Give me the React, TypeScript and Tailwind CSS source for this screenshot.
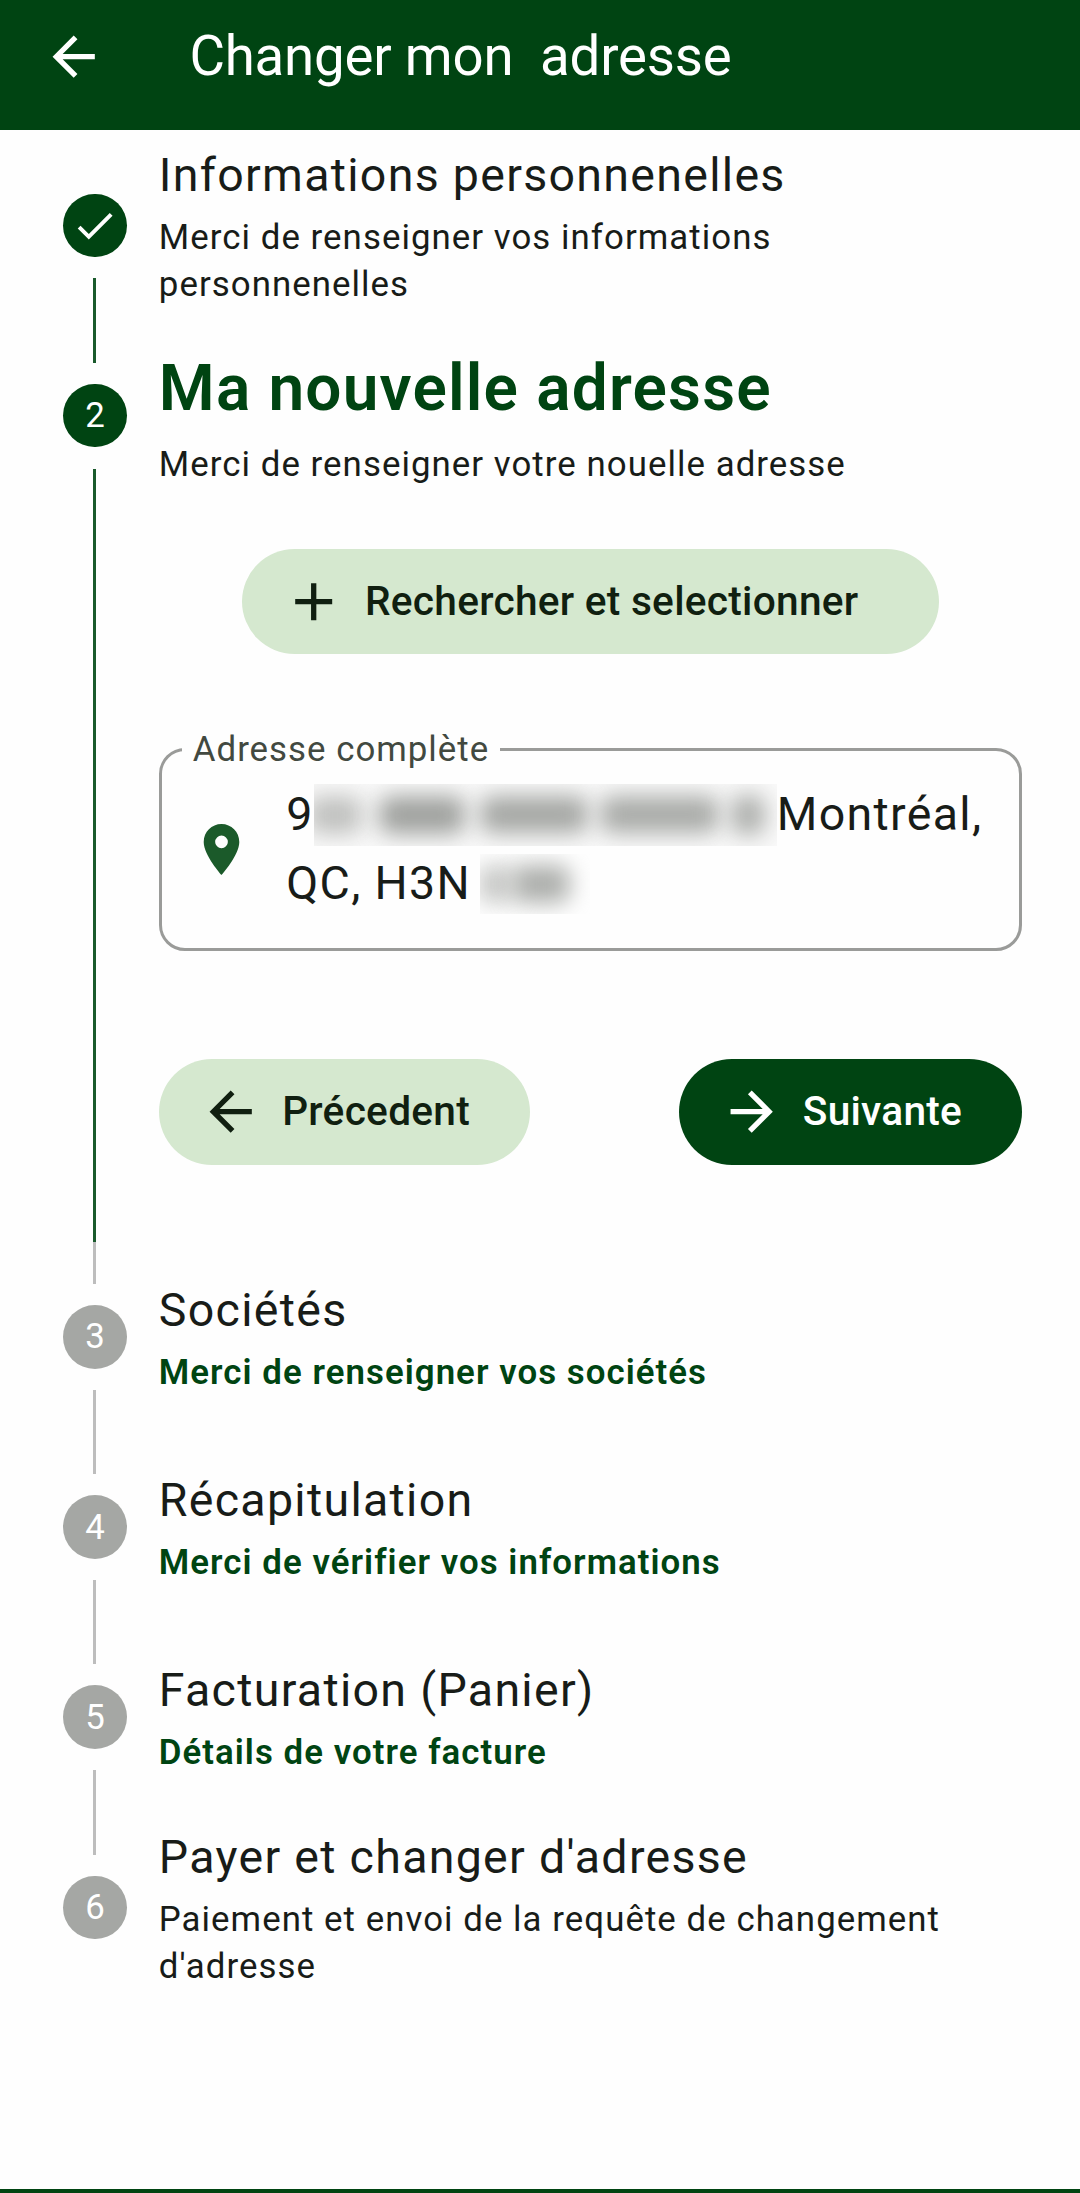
import React from 'react';
import { MdAdd, MdArrowBack, MdArrowForward, MdCheck, MdPlace } from 'react-icons/md';

interface Step {
  title: string;
  subtitle: string;
  state: 'done' | 'active' | 'idle';
  highlight?: boolean;
}

const steps: Step[] = [
  { title: 'Informations personnenelles', subtitle: 'Merci de renseigner vos informations personnenelles', state: 'done' },
  { title: 'Ma nouvelle adresse', subtitle: 'Merci de renseigner votre nouelle adresse', state: 'active' },
  { title: 'Sociétés', subtitle: 'Merci de renseigner vos sociétés', state: 'idle', highlight: true },
  { title: 'Récapitulation', subtitle: 'Merci de vérifier vos informations', state: 'idle', highlight: true },
  { title: 'Facturation (Panier)', subtitle: 'Détails de votre facture', state: 'idle', highlight: true },
  { title: "Payer et changer d'adresse", subtitle: "Paiement et envoi de la requête de changement d'adresse", state: 'idle' },
];

const Line = ({ className }: { className: string }) => <div className={`w-[3px] flex-1 ${className}`} />;

// Circle with half a connector above and below it
const StepRail = ({ index, state }: { index: number; state: Step['state'] }) => {
  const isIdle = state === 'idle';
  const color = isIdle ? 'bg-[#bdbdbd]' : 'bg-[#1a5a2c]';
  return (
    <div className="flex w-[63.6px] shrink-0 flex-col items-center self-stretch">
      <Line className={index === 0 ? 'bg-transparent' : color} />
      <div
        className={`my-[21.1px] flex size-[63.6px] items-center justify-center rounded-full text-[34.8px] leading-none text-white ${
          isIdle ? 'bg-[#a5a7a4]' : 'bg-[#004412]'
        }`}
      >
        {state === 'done' ? <MdCheck size={47.5} /> : index + 1}
      </div>
      <Line className={index === steps.length - 1 ? 'bg-transparent' : color} />
    </div>
  );
};

const StepHeader = ({ step, index }: { step: Step; index: number }) => (
  <div className="flex h-[190.2px] items-center pl-[63.2px]">
    <StepRail index={index} state={step.state} />
    <div className="ml-[32px] w-[800px] pb-[1.4px]">
      <h2
        className={
          step.state === 'active'
            ? 'text-[63.9px] leading-[95.8px] font-semibold tracking-[1.2px] text-[#004412]'
            : 'text-[46.5px] leading-[69.7px] tracking-[1.3px] text-[#181c18]'
        }
      >
        {step.title}
      </h2>
      <p
        className={`mt-[4.4px] text-[34.85px] leading-[46.8px] tracking-[1.04px] ${
          step.highlight ? 'font-semibold text-[#004412]' : 'text-[#181c18]'
        }`}
      >
        {step.subtitle}
      </p>
    </div>
  </div>
);

const Smudge = ({ className }: { className: string }) => <span className={`shrink-0 rounded-xl blur-[11px] ${className}`} />;

const AddressField = () => (
  <fieldset className="mt-[72px] h-[225px] rounded-[26px] border-[3px] border-[#9a9b99]">
    <legend className="ml-[20px] h-[46px] px-[11px] text-[34.85px] leading-[47px] tracking-[1px] text-[#424940]">
      Adresse complète
    </legend>
    <div className="flex items-start">
      <MdPlace size={61} className="mt-[47px] ml-[29.5px] shrink-0 text-[#1b5a2a]" />
      <div className="mt-[8px] ml-[34px] text-[46.5px] leading-[69px] tracking-[1.32px] text-[#181c18]">
        <div className="flex h-[69px] items-center">
          <span>9</span>
          <span className="flex h-[62px] w-[463px] items-center overflow-hidden bg-[#f9f9f9]">
            <Smudge className="-ml-[6px] h-[38px] w-[54px] bg-[#c0c1bf]" />
            <Smudge className="ml-[17px] h-[38px] w-[86px] bg-[#9fa19e]" />
            <Smudge className="ml-[15px] h-[37px] w-[108px] bg-[#a5a7a4]" />
            <Smudge className="ml-[12px] h-[37px] w-[119px] bg-[#a9aba8]" />
            <Smudge className="ml-[12px] h-[40px] w-[34px] bg-[#adafac]" />
          </span>
          <span>Montréal,</span>
        </div>
        <div className="flex h-[69px] items-center">
          <span>QC, H3N</span>
          <span className="ml-[9px] flex h-[60px] w-[110px] items-center overflow-hidden">
            <Smudge className="-ml-[2px] h-[38px] w-[36px] bg-[#c8c9c7]" />
            <Smudge className="-ml-[2px] h-[38px] w-[58px] bg-[#adafac]" />
          </span>
        </div>
      </div>
    </div>
  </fieldset>
);

const buttonBase = 'flex h-[105.6px] items-center rounded-full text-[40.65px] font-medium tracking-[0.26px]';

const AddressForm = () => (
  <div className="flex h-[731px] pl-[63.2px]">
    <div className="flex w-[63.6px] shrink-0 justify-center">
      <div className="h-full w-[3px] bg-[#1a5a2c]" />
    </div>
    <div className="ml-[32px] w-[863.6px] pt-[38px]">
      <button className={`${buttonBase} mx-auto w-[697px] bg-[#d5e8cf] pl-[40px] text-[#101f10]`}>
        <MdAdd size={63.4} />
        <span className="ml-[19.5px]">Rechercher et selectionner</span>
      </button>
      <AddressField />
      <div className="mt-[107.8px] flex justify-between">
        <button className={`${buttonBase} w-[371.4px] bg-[#d5e8cf] pl-[40.5px] text-[#101f10]`}>
          <MdArrowBack size={63.4} />
          <span className="ml-[19.5px]">Précedent</span>
        </button>
        <button className={`${buttonBase} w-[343px] bg-[#004412] pl-[40.5px] text-white`}>
          <MdArrowForward size={63.4} />
          <span className="ml-[19.5px]">Suivante</span>
        </button>
      </div>
    </div>
  </div>
);

const App = () => {
  return (
    <div className="flex h-[2193px] w-[1080px] flex-col overflow-hidden bg-[#fefefe] font-['Roboto',sans-serif]">
      <header className="flex h-[130.4px] shrink-0 items-start bg-[#004412] pt-[20px] pl-[42.4px] text-white">
        <MdArrowBack size={63.4} className="mt-[4.6px]" />
        <h1 className="ml-[83.6px] text-[54.6px] leading-[73px] tracking-[-0.2px] whitespace-pre">Changer mon  adresse</h1>
      </header>
      <main className="flex-1">
        {steps.map((step, index) => (
          <React.Fragment key={step.title}>
            <StepHeader step={step} index={index} />
            {step.state === 'active' && <AddressForm />}
          </React.Fragment>
        ))}
      </main>
      <footer className="h-[3.6px] shrink-0 bg-[#004412]" />
    </div>
  );
};

export default App;
